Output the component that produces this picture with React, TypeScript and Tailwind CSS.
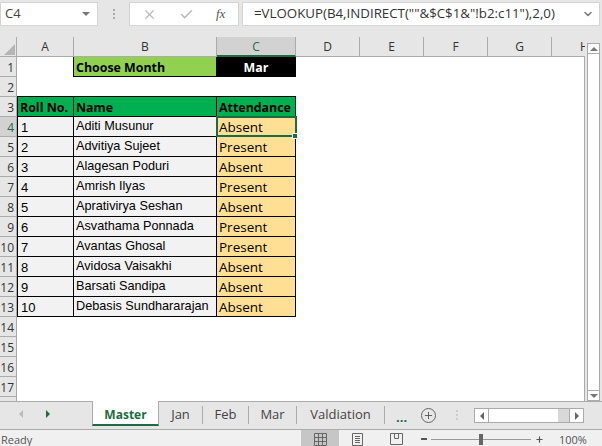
import { Check, ChevronDown, Plus, X } from "lucide-react";

const students = [
  { roll: "1", name: "Aditi Musunur", status: "Absent" },
  { roll: "2", name: "Advitiya Sujeet", status: "Present" },
  { roll: "3", name: "Alagesan Poduri", status: "Absent" },
  { roll: "4", name: "Amrish Ilyas", status: "Present" },
  { roll: "5", name: "Aprativirya Seshan", status: "Absent" },
  { roll: "6", name: "Asvathama Ponnada", status: "Present" },
  { roll: "7", name: "Avantas Ghosal", status: "Present" },
  { roll: "8", name: "Avidosa Vaisakhi", status: "Absent" },
  { roll: "9", name: "Barsati Sandipa", status: "Absent" },
  { roll: "10", name: "Debasis Sundhararajan", status: "Absent" },
];

const emptyRows = [14, 15, 16, 17];

function RowHead({ n, active }: { n?: number; active?: boolean }) {
  return (
    <div
      className={`w-[17px] shrink-0 h-full border-b border-b-[#ababab] border-r border-r-[#ababab] flex items-center justify-end pr-[2px] pt-[2px] text-[12px] ${
        active ? "bg-[#d2d2d2] text-[#1e6b41]" : "bg-[#e6e6e6] text-[#333]"
      }`}
    >
      {n}
    </div>
  );
}

function ColHead({ label, width, active }: { label: string; width: string; active?: boolean }) {
  return (
    <div
      className={`${width} shrink-0 h-full flex items-center justify-center pt-[1px] text-[12px] border-r border-r-[#ababab] ${
        active ? "bg-[#d2d2d2] text-[#1e6b41] border-b-2 border-b-[#1e6b41]" : "text-[#333] border-b border-b-[#ababab]"
      }`}
    >
      {label}
    </div>
  );
}

function Tab({ label, width }: { label: string; width: string }) {
  return (
    <div className={`${width} h-[18px] flex items-center justify-center border-r border-[#ababab] text-[13px] text-[#444]`}>
      {label}
    </div>
  );
}

export default function App() {
  return (
    <div className="w-[602px] h-[446px] bg-[#e6e6e6] flex flex-col overflow-hidden font-['Open_Sans',sans-serif] text-black">
      {/* Formula bar */}
      <div className="h-[37px] shrink-0 pt-[2px] flex items-start text-[13px]">
        <div className="w-[98px] h-[24px] bg-white border border-[#d4d4d4] flex items-center justify-between pl-[4px] pr-[7px] text-[#444]">
          <span>C4</span>
          <span className="w-0 h-0 border-x-[4px] border-x-transparent border-t-[4px] border-t-[#777]" />
        </div>
        <div className="w-[31px] h-[24px] flex flex-col items-center justify-center gap-[2px]">
          <span className="w-[2px] h-[2px] bg-[#aaa]" />
          <span className="w-[2px] h-[2px] bg-[#aaa]" />
          <span className="w-[2px] h-[2px] bg-[#aaa]" />
        </div>
        <div className="w-[110px] h-[24px] bg-white border border-[#d4d4d4] flex items-center pl-[12px] text-[#bbb]">
          <X size={15} strokeWidth={2} />
          <Check size={15} strokeWidth={2.5} className="ml-[22px]" />
          <span className="ml-[22px] font-['Liberation_Serif',serif] italic text-[13px] text-[#555]">fx</span>
        </div>
        <div className="ml-[3px] w-[358px] h-[24px] bg-white border border-[#d4d4d4] flex items-center justify-between pl-[11px] pr-[5px] text-[13.3px] text-[#333]">
          <span>=VLOOKUP(B4,INDIRECT(""&amp;$C$1&amp;"!b2:c11"),2,0)</span>
          <ChevronDown size={12} strokeWidth={3} className="text-[#777]" />
        </div>
      </div>

      {/* Sheet + vertical scrollbar */}
      <div className="h-[364px] shrink-0 flex overflow-hidden">
        <div className="w-[585px] shrink-0 flex flex-col overflow-hidden">
          <div className="h-[20px] shrink-0 flex bg-[#e6e6e6]">
            <div className="w-[17px] shrink-0 h-full border-r border-b border-[#ababab] relative">
              <span className="absolute right-[1px] bottom-[1px] w-0 h-0 border-l-[11px] border-l-transparent border-b-[11px] border-b-[#b5b5b5]" />
            </div>
            <ColHead label="A" width="w-[57px]" />
            <ColHead label="B" width="w-[143px]" />
            <ColHead label="C" width="w-[79px]" active />
            <ColHead label="D" width="w-[64px]" />
            <ColHead label="E" width="w-[64px]" />
            <ColHead label="F" width="w-[64px]" />
            <ColHead label="G" width="w-[64px]" />
            <div className="flex-1 flex items-center justify-center pt-[1px] text-[12px] text-[#333] border-b border-b-[#ababab] pl-[28px]">H</div>
          </div>

          <div className="flex-1 flex flex-col border-r border-[#ababab] bg-white overflow-hidden">
            {/* Row 1 */}
            <div className="h-[20px] shrink-0 flex">
              <RowHead n={1} />
              <div className="w-[56px]" />
              <div className="w-[143px] bg-[#92d050] border-l border-b border-black pl-[2px] pt-[3px] flex items-center font-bold text-[12.4px]">Choose Month</div>
              <div className="w-[80px] bg-black text-white pt-[3px] flex items-center justify-center font-bold text-[12.4px]">Mar</div>
            </div>
            {/* Row 2 */}
            <div className="h-[20px] shrink-0 flex">
              <RowHead n={2} />
              <div className="w-[279px] border-b border-black" />
            </div>
            {/* Row 3 */}
            <div className="h-[20px] shrink-0 flex">
              <RowHead n={3} />
              <div className="w-[56px] bg-[#00b050] border-l border-b border-black pl-[2px] pt-[3px] flex items-center font-bold text-[12.4px] whitespace-nowrap">Roll No.</div>
              <div className="w-[143px] bg-[#00b050] border-l border-b border-black pl-[2px] pt-[3px] flex items-center font-bold text-[12.4px]">Name</div>
              <div className="w-[80px] bg-[#00b050] border-x border-b border-black pl-[2px] pt-[3px] flex items-center font-bold text-[12.4px]">Attendance</div>
            </div>
            {/* Student rows */}
            {students.map((s, i) => (
              <div key={s.roll} className="h-[20px] shrink-0 flex">
                <RowHead n={i + 4} active={i === 0} />
                <div className="w-[56px] bg-[#f2f2f2] border-l border-b border-black pl-[3px] pt-[3px] flex items-center font-['Liberation_Sans',sans-serif] text-[13px]">{s.roll}</div>
                <div className="w-[143px] bg-[#f2f2f2] border-l border-b border-black pl-[2px] flex items-center font-['Liberation_Sans',sans-serif] text-[12.7px] whitespace-nowrap">{s.name}</div>
                <div className="w-[80px] relative bg-[#ffdf94] border-x border-b border-black pl-[2px] pt-[1px] flex items-center text-[13.5px]">
                  {s.status}
                  {i === 0 && (
                    <>
                      <span className="absolute z-10 -left-[1px] -top-[1px] -right-[2px] -bottom-[1px] border-2 border-[#1e6b41]" />
                      <span className="absolute z-10 -right-[3px] -bottom-[3px] w-[6px] h-[6px] bg-[#1e6b41] border border-white" />
                    </>
                  )}
                </div>
              </div>
            ))}
            {emptyRows.map((n) => (
              <div key={n} className="h-[20px] shrink-0 flex">
                <RowHead n={n} />
              </div>
            ))}
            <div className="h-[20px] shrink-0 flex">
              <RowHead />
            </div>
          </div>
        </div>

        {/* Vertical scrollbar */}
        <div className="ml-[2px] mt-[6px] w-[13px] flex flex-col bg-white border-x border-[#ababab]">
          <div className="h-[11px] bg-white border-y border-[#ababab] flex items-center justify-center">
            <span className="w-0 h-0 border-x-[4px] border-x-transparent border-b-[4px] border-b-[#777]" />
          </div>
          <div className="flex-1" />
          <div className="h-[11px] bg-white border-y border-[#ababab] flex items-center justify-center">
            <span className="w-0 h-0 border-x-[4px] border-x-transparent border-t-[4px] border-t-[#777]" />
          </div>
        </div>
      </div>

      {/* Sheet tabs */}
      <div className="h-[29px] shrink-0 flex items-start border-b border-[#ababab] relative">
        <div className="w-[92px] h-full border-t border-[#ababab] flex items-center pb-[4px]">
          <span className="ml-[19px] w-0 h-0 border-y-[4px] border-y-transparent border-r-[4px] border-r-[#bbb]" />
          <span className="ml-[23px] w-0 h-0 border-y-[4px] border-y-transparent border-l-[4px] border-l-[#1e6b41]" />
        </div>
        <div className="w-[67px] h-[25px] bg-white border-x border-[#ababab] border-b-2 border-b-[#1e6b41] pt-[4px] flex items-center justify-center text-[12px] font-bold text-[#1e6b41]">Master</div>
        <div className="flex-1 h-full border-t border-[#ababab] flex items-start">
          <div className="flex items-center pt-[4px]">
            <Tab label="Jan" width="w-[44px]" />
            <Tab label="Feb" width="w-[46px]" />
            <Tab label="Mar" width="w-[48px]" />
            <Tab label="Valdiation" width="w-[88px]" />
          </div>
          <span className="ml-[11px] mt-[6px] w-[11px] text-[13px] font-bold text-[#1e6b41] leading-[18px]">...</span>
          <span className="ml-[14px] mt-[6px] w-[15px] h-[15px] rounded-full border border-[#666] flex items-center justify-center text-[#555]">
            <Plus size={11} strokeWidth={2} />
          </span>
          <div className="ml-[20px] mt-[8px] w-[2px] h-[10px] flex flex-col justify-between">
            <span className="h-[2px] bg-[#ccc]" />
            <span className="h-[2px] bg-[#ccc]" />
            <span className="h-[2px] bg-[#ccc]" />
          </div>
          <div className="ml-[16px] mt-[6px] w-[110px] h-[15px] flex border border-[#ababab] bg-[#d8d8d8]">
            <div className="w-[14px] bg-white border-r border-[#ababab] flex items-center justify-center">
              <span className="w-0 h-0 border-y-[4px] border-y-transparent border-r-[4px] border-r-[#666]" />
            </div>
            <div className="w-[69px] bg-white" />
            <div className="flex-1" />
            <div className="w-[14px] bg-white border-l border-[#ababab] flex items-center justify-center">
              <span className="w-0 h-0 border-y-[4px] border-y-transparent border-l-[4px] border-l-[#666]" />
            </div>
          </div>
        </div>
      </div>

      {/* Status bar */}
      <div className="flex-1 bg-[#f0f0f0] flex items-center text-[11px] text-[#555]">
        <span className="pl-[1px] pt-[2px] w-[301px]">Ready</span>
        <div className="w-[38px] h-full bg-[#c6c6c6] flex items-center justify-center">
          <svg width="13" height="13" viewBox="0 0 13 13" fill="none" stroke="#666">
            <path d="M.5.5h12v12H.5zM.5 4.5h12M.5 8.5h12M4.5.5v12M8.5.5v12" />
          </svg>
        </div>
        <svg className="ml-[13px]" width="11" height="13" viewBox="0 0 11 13" fill="none" stroke="#666">
          <path d="M.5.5h10v12H.5zM3 3.5h5M3 5.5h5M3 7.5h5M3 9.5h5" />
        </svg>
        <svg className="ml-[27px]" width="13" height="12" viewBox="0 0 13 12" fill="none" stroke="#666">
          <path d="M.5.5h12v11H.5zM4.5.5v5h4v-5" />
        </svg>
        <span className="ml-[18px] w-[6px] h-[2px] bg-[#555]" />
        <div className="ml-[4px] w-[100px] h-[1px] bg-[#999] relative">
          <span className="absolute left-[48px] -top-[5px] w-[4px] h-[11px] bg-[#666]" />
        </div>
        <Plus size={9} strokeWidth={3} className="ml-[4px] text-[#555]" />
        <span className="ml-[15px] pt-[2px] text-[11px]">100%</span>
      </div>
    </div>
  );
}
